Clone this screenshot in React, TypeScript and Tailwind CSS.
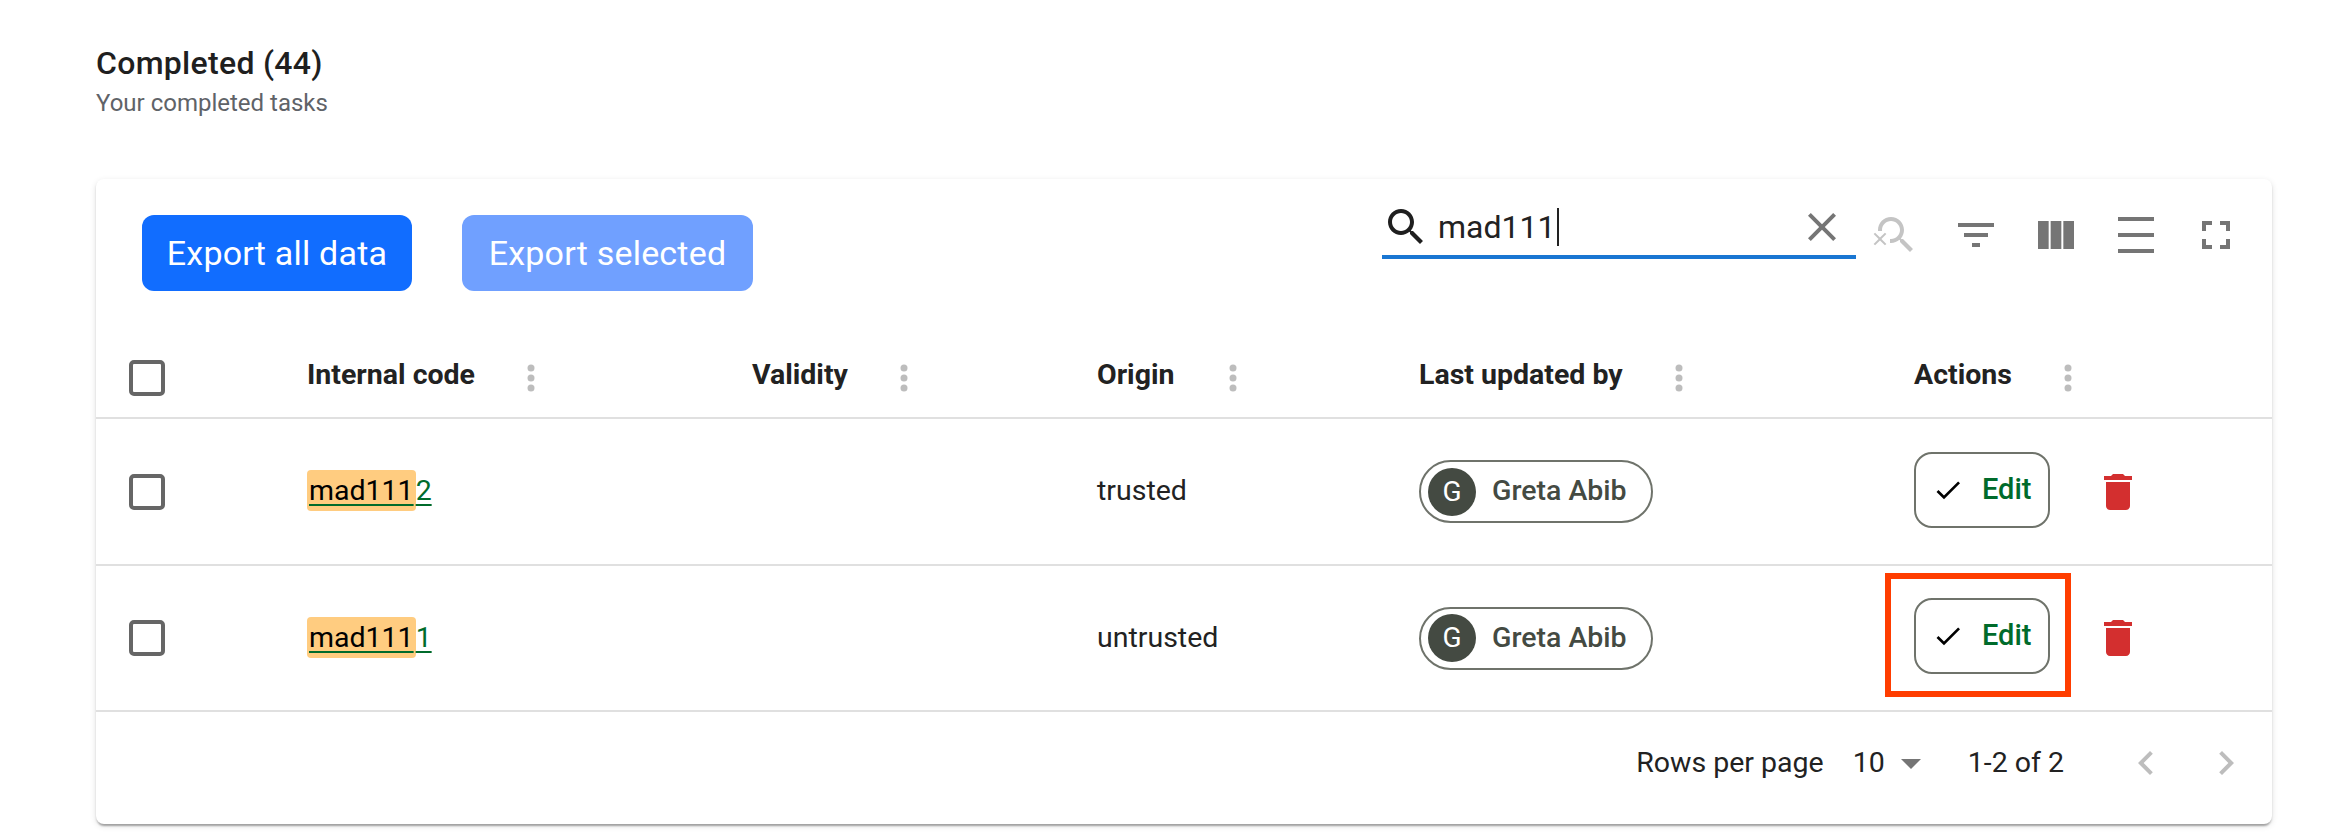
const GRID_COLS = "grid grid-cols-[211px_445px_345px_322px_495px_358px] items-center";

const COLUMNS = [
  { label: "Internal code", labelClass: "w-[220px]" },
  { label: "Validity", labelClass: "w-[148px]" },
  { label: "Origin", labelClass: "w-[132px]" },
  { label: "Last updated by", labelClass: "w-[256px]" },
  { label: "Actions", labelClass: "w-[150px]" },
];

const ROWS = [
  { suffix: "2", origin: "trusted", flagged: false, height: "h-[147px]" },
  { suffix: "1", origin: "untrusted", flagged: true, height: "h-[146px]" },
];

function Icon({ d, className }: { d: string; className: string }) {
  return (
    <svg viewBox="0 0 24 24" className={className} fill="currentColor">
      <path d={d} />
    </svg>
  );
}

const SEARCH =
  "M15.5 14h-.79l-.28-.27C15.41 12.59 16 11.11 16 9.5 16 5.91 13.09 3 9.5 3S3 5.91 3 9.5 5.91 16 9.5 16c1.61 0 3.09-.59 4.23-1.57l.27.28v.79l5 4.99L20.49 19l-4.99-5zm-6 0C7.01 14 5 11.99 5 9.5S7.01 5 9.5 5 14 7.01 14 9.5 11.99 14 9.5 14z";
const SEARCH_OFF =
  "M15.5 14h-.79l-.28-.27C15.41 12.59 16 11.11 16 9.5 16 5.91 13.09 3 9.5 3S3 5.91 3 9.5c0 .17.01.33.03.5h2.02c-.02-.17-.05-.33-.05-.5C5 7.01 7.01 5 9.5 5S14 7.01 14 9.5 11.99 14 9.5 14c-.17 0-.33-.02-.5-.05v2.02c.17.02.33.03.5.03 1.61 0 3.09-.59 4.23-1.57l.27.28v.79l5 4.99L20.49 19l-4.99-5zM6.47 10.82 4 13.29l-2.47-2.47-.71.71L3.29 14 .82 16.47l.71.71L4 14.71l2.47 2.47.71-.71L4.71 14l2.47-2.47z";
const CLOSE =
  "M19 6.41 17.59 5 12 10.59 6.41 5 5 6.41 10.59 12 5 17.59 6.41 19 12 13.41 17.59 19 19 17.59 13.41 12z";
const FILTER = "M10 18h4v-2h-4v2zM3 6v2h18V6H3zm3 7h12v-2H6v2z";
const COLUMNS_ICON = "M14.67 5v14H9.33V5h5.34zm1 14H21V5h-5.33v14zm-7.34 0V5H3v14h5.33z";
const DENSITY = "M3 3h18v2H3zm0 16h18v2H3zm0-8h18v2H3z";
const FULLSCREEN = "M7 14H5v5h5v-2H7v-3zm-2-4h2V7h3V5H5v5zm12 7h-3v2h5v-5h-2v3zM14 5v2h3v3h2V5h-5z";
const CHECK = "M9 16.17 4.83 12l-1.42 1.41L9 19 21 7l-1.41-1.41z";
const TRASH = "M6 19c0 1.1.9 2 2 2h8c1.1 0 2-.9 2-2V7H6v12zM19 4h-3.5l-1-1h-5l-1 1H5v2h14V4z";
const ARROW_DOWN = "M7 10l5 5 5-5z";
const PREV = "M15.41 7.41 14 6l-6 6 6 6 1.41-1.41L10.83 12z";
const NEXT = "M10 6 8.59 7.41 13.17 12l-4.58 4.59L10 18l6-6z";

function Checkbox() {
  return <div className="ml-[33px] h-9 w-9 rounded-[5px] border-[4px] border-[#666666]" />;
}

function HeaderDots() {
  return (
    <svg viewBox="0 0 8 28" className="h-7 w-2 text-[#bdbdbd]" fill="currentColor">
      <circle cx="4" cy="4" r="3.5" />
      <circle cx="4" cy="14" r="3.5" />
      <circle cx="4" cy="24" r="3.5" />
    </svg>
  );
}

function EditButton() {
  return (
    <div className="flex h-[76px] w-[136px] items-center rounded-[18px] border-2 border-[#6f736b] pl-[16px]">
      <Icon d={CHECK} className="h-8 w-8 text-black" />
      <span className="ml-[18px] text-[29px] font-medium text-[#006b2b]">Edit</span>
    </div>
  );
}

export default function App() {
  return (
    <div className="h-[836px] overflow-hidden bg-white pl-[96px] font-['Roboto',sans-serif]">
      <header className="h-[179px] pt-[41px]">
        <h1 className="text-[32px] leading-[44px] font-medium tracking-[0.3px] text-[#1f1f1f]">Completed (44)</h1>
        <p className="text-[24px] leading-[36px] text-[#5f6368]">Your completed tasks</p>
      </header>

      <section className="w-[2176px] rounded-[8px] bg-white shadow-[0_4px_2px_-2px_rgba(0,0,0,0.2),0_2px_2px_0_rgba(0,0,0,0.14),0_2px_6px_0_rgba(0,0,0,0.12)]">
        <div className="flex h-[160px] justify-between pr-[32px]">
          <div className="flex gap-[50px] pt-[36px] pl-[46px]">
            <button className="h-[76px] w-[270px] rounded-[12px] bg-[#116dff] text-[34px] tracking-[0.2px] text-white">
              Export all data
            </button>
            <button className="h-[76px] w-[291px] rounded-[12px] bg-[#70a0ff] text-[34px] tracking-[0.2px] text-white">
              Export selected
            </button>
          </div>

          <div className="flex items-start pt-[24px]">
            <div className="mr-[16px] flex h-[56px] w-[474px] items-start border-b-[4px] border-[#1976d2]">
              <Icon d={SEARCH} className="h-12 w-12 text-[#1f1f1f]" />
              <span className="ml-[8px] flex h-[48px] items-center text-[32px] text-[#222222]">
                mad111
                <span className="ml-[2px] h-[38px] w-[2px] bg-[#222222]" />
              </span>
              <Icon d={CLOSE} className="ml-auto mr-[10px] h-12 w-12 text-[#757575]" />
            </div>
            <div className="flex gap-[32px] pt-[8px] text-[#757575]">
              <Icon d={SEARCH_OFF} className="h-12 w-12 text-[#c4c4c4]" />
              <Icon d={FILTER} className="h-12 w-12" />
              <Icon d={COLUMNS_ICON} className="h-12 w-12" />
              <Icon d={DENSITY} className="h-12 w-12" />
              <Icon d={FULLSCREEN} className="h-12 w-12" />
            </div>
          </div>
        </div>

        <div className={`${GRID_COLS} h-[80px] border-b-2 border-[#e0e0e0]`}>
          <Checkbox />
          {COLUMNS.map((col) => (
            <div key={col.label} className="flex items-center">
              <span className={`${col.labelClass} pb-[6px] text-[28.5px] font-bold text-[#222222]`}>{col.label}</span>
              <HeaderDots />
            </div>
          ))}
        </div>

        {ROWS.map((row) => (
          <div key={row.suffix} className={`${GRID_COLS} ${row.height} border-b-2 border-[#e0e0e0]`}>
            <Checkbox />
            <div className="text-[28.5px] text-[#006b2b] underline decoration-2 underline-offset-[4px]">
              <mark className="rounded-[4px] bg-[#ffcc80] px-[2px] py-[4px] text-black">mad111</mark>
              {row.suffix}
            </div>
            <div />
            <div className="text-[28.5px] text-[#222222]">{row.origin}</div>
            <div>
              <div className="flex h-[63px] w-[234px] items-center rounded-full border-2 border-[#6f736b] pl-[7px]">
                <div className="flex h-12 w-12 items-center justify-center rounded-full bg-[#444a42] text-[28px] text-white">
                  G
                </div>
                <span className="ml-[16px] text-[28.5px] font-medium text-[#444a42]">Greta Abib</span>
              </div>
            </div>
            <div className="flex items-center">
              <div className="relative mb-[4px]">
                <EditButton />
                {row.flagged && (
                  <div className="absolute top-[-25px] left-[-29px] h-[124px] w-[186px] border-[6px] border-[#ff3d00]" />
                )}
              </div>
              <Icon d={TRASH} className="ml-[44px] h-12 w-12 text-[#d32f2f]" />
            </div>
          </div>
        ))}

        <div className="flex h-[112px] items-center justify-end pr-[22px] pb-[10px] text-[28.5px] text-[#222222]">
          <span>Rows per page</span>
          <span className="ml-[29px]">10</span>
          <Icon d={ARROW_DOWN} className="ml-[2px] h-12 w-12 text-[#757575]" />
          <span className="ml-[33px]">1-2 of 2</span>
          <Icon d={PREV} className="ml-[58px] h-12 w-12 text-[#bdbdbd]" />
          <Icon d={NEXT} className="ml-[32px] h-12 w-12 text-[#bdbdbd]" />
        </div>
      </section>
    </div>
  );
}
